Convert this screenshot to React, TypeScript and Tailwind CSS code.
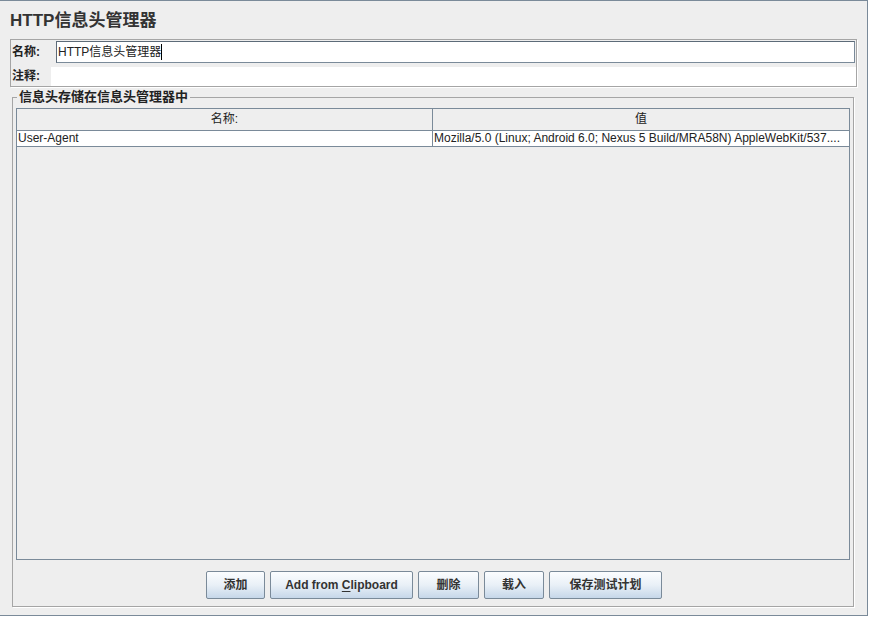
import React from "react";

const buttons: { label: React.ReactNode; width: string }[] = [
  { label: "添加", width: "w-[59px]" },
  {
    label: (
      <span>
        Add from <span className="underline underline-offset-2">C</span>lipboard
      </span>
    ),
    width: "w-[143px]",
  },
  { label: "删除", width: "w-[61px]" },
  { label: "载入", width: "w-[60px]" },
  { label: "保存测试计划", width: "w-[113px]" },
];

export default function App() {
  return (
    <div className="w-[870px] h-[618px] bg-white font-['Liberation_Sans','Noto_Sans_CJK_SC',sans-serif] text-[12px] text-[#222]">
      <div className="w-[868px] h-[616px] bg-[#eeeeee] border-t border-r border-b border-[#7a8a99] flex flex-col">
        {/* title */}
        <h1 className="ml-[10px] mt-[10px] h-[28px] text-[17px] font-bold leading-[20px] text-[#333]">
          HTTP信息头管理器
        </h1>

        {/* name / comment panel */}
        <div className="ml-[10px] w-[847px] h-[48px] border border-[#a5a5a5] shadow-[1px_1px_0_#fff] pt-[1px] flex flex-col gap-[4px]">
          <div className="flex h-[22px] items-center">
            <span className="w-[45px] pl-[1px] font-bold leading-[22px]">名称:</span>
            <div className="w-[799px] h-[22px] border border-[#7a8a99] border-t-[#5d6b78] border-l-[#5d6b78] bg-white flex items-center pl-[1px] leading-[16px]">
              HTTP信息头管理器
              <span className="w-px h-[16px] bg-black" />
            </div>
          </div>
          <div className="flex h-[19px] items-center">
            <span className="w-[40px] pl-[1px] font-bold leading-[19px]">注释:</span>
            <div className="flex-1 h-[19px] bg-white" />
          </div>
        </div>

        {/* headers group */}
        <fieldset className="ml-[12px] mt-[2px] w-[842px] h-[518px] border border-[#a5a5a5] shadow-[1px_1px_0_#fff] px-[3px]">
          <legend className="ml-[1px] px-[2px] text-[13px] font-bold leading-[16px] text-[#222]">
            信息头存储在信息头管理器中
          </legend>

          <div className="mt-[3px] w-[834px] h-[452px] border border-[#7a8a99] bg-[#eeeeee] flex flex-col">
            <div className="flex h-[22px] border-b border-[#7a8a99]">
              <div className="w-[416px] border-r border-[#7a8a99] flex items-center justify-center leading-[21px]">
                名称:
              </div>
              <div className="flex-1 flex items-center justify-center leading-[21px]">值</div>
            </div>
            <div className="flex h-[16px] bg-white border-b border-[#7a8a99]">
              <div className="w-[416px] border-r border-[#7a8a99] pl-[1px] leading-[15px] whitespace-nowrap overflow-hidden">
                User-Agent
              </div>
              <div className="flex-1 pl-[1px] leading-[15px] whitespace-nowrap overflow-hidden">
                Mozilla/5.0 (Linux; Android 6.0; Nexus 5 Build/MRA58N) AppleWebKit/537....
              </div>
            </div>
          </div>

          <div className="mt-[11px] pl-[2px] flex justify-center gap-[5px]">
            {buttons.map((b, i) => (
              <button
                key={i}
                className={`${b.width} h-[28px] rounded-[2px] border border-[#7a8a99] bg-linear-to-b from-[#fbfdff] via-[#e9f0f7] to-[#c6d7e9] font-bold text-[12px] text-[#333] flex items-center justify-center whitespace-nowrap`}
              >
                {b.label}
              </button>
            ))}
          </div>
        </fieldset>
      </div>
    </div>
  );
}
